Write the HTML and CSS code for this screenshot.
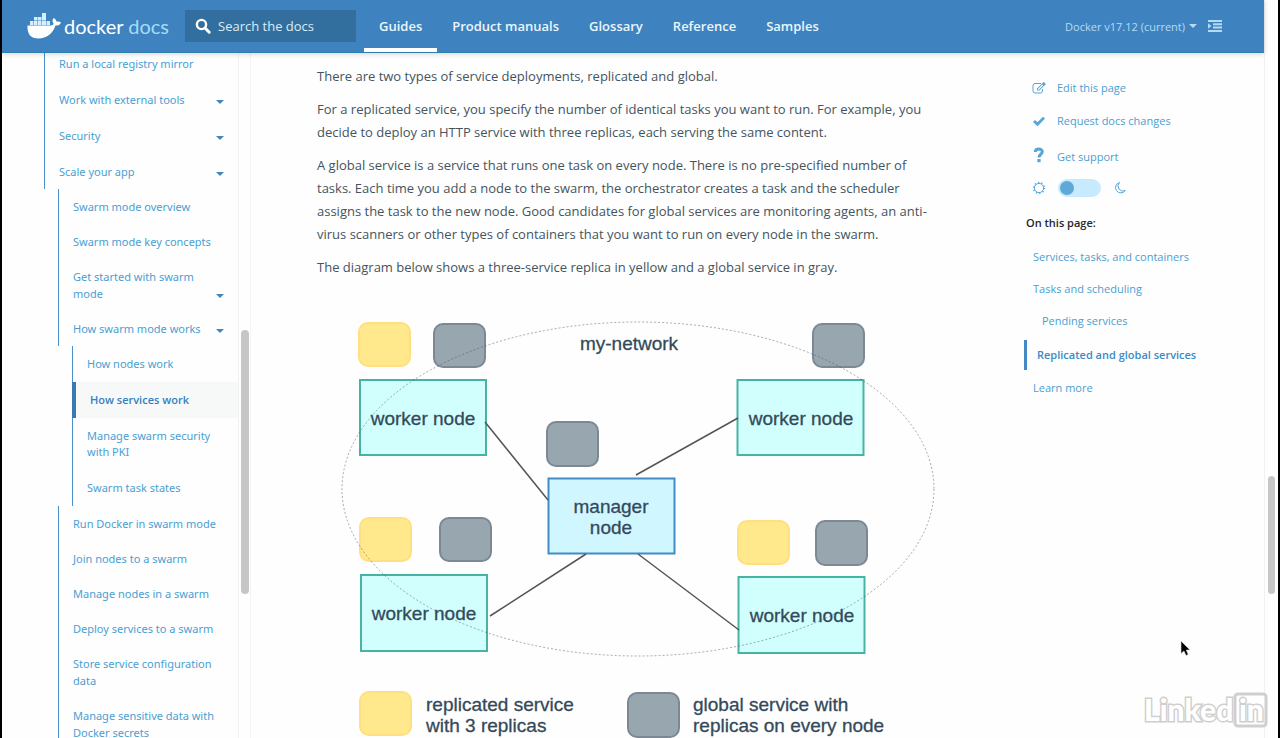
FILE: index.html
```
<!DOCTYPE html>
<html lang="en">
<head>
<meta charset="utf-8">
<title>How services work | Docker Documentation</title>
<link rel="stylesheet" href="styles.css">
</head>
<body>
<div class="page">
  <header class="topbar">
    <a class="brand" href="#">
      <svg class="whale" viewBox="0 0 34 28" aria-hidden="true">
        <g fill="#d5f0fc">
          <rect x="15" y="1" width="4" height="4"/>
          <rect x="7" y="5" width="3.500" height="3.500"/><rect x="11" y="5" width="3.500" height="3.500"/><rect x="15" y="5" width="4" height="3.500"/>
          <rect x="3" y="9" width="3.500" height="4"/><rect x="7" y="9" width="3.500" height="4"/><rect x="11" y="9" width="3.500" height="4"/><rect x="15" y="9" width="4" height="4"/><rect x="19.500" y="9" width="3.500" height="4"/>
        </g>
        <path fill="#fff" d="M0.500 13.500H23.500C25.500 13.500 26.500 12.500 26.500 11.500C25 9.500 25.200 7.500 26.800 6C28.500 7 29.300 8.500 29.500 9.800C31 9.400 32.800 9.600 34 10.400C33 12.800 31 13.700 28.500 13.600C25.800 22 19.500 26.500 11.500 26.500C4 26.500 0 22.500 0.500 13.500Z"/>
      </svg>
      <span class="brand-name">docker <span class="brand-docs">docs</span></span>
    </a>
    <label class="search">
      <svg class="search-icon" viewBox="0 0 16 16" aria-hidden="true"><circle cx="6.500" cy="6.500" r="4.600" fill="none" stroke="#fff" stroke-width="2.400"/><path d="M10 10L14.200 14.200" stroke="#fff" stroke-width="3" stroke-linecap="round"/></svg>
      <input type="text" placeholder="Search the docs" aria-label="Search the docs">
    </label>
    <nav class="tabs">
      <a class="tab tab-active" href="#">Guides</a>
      <a class="tab" href="#">Product manuals</a>
      <a class="tab" href="#">Glossary</a>
      <a class="tab" href="#">Reference</a>
      <a class="tab" href="#">Samples</a>
    </nav>
    <div class="tools">
      <button class="version" type="button">Docker v17.12 (current)<span class="caret"></span></button>
      <button class="outline-toggle" type="button" aria-label="Toggle outline">
        <svg viewBox="0 0 14 12" aria-hidden="true"><path fill="#b3dcf3" d="M0 0H14V2H0ZM5 3.300H14V5.300H5ZM5 6.600H14V8.600H5ZM0 10H14V12H0ZM0 3.300L3.500 6L0 8.700Z"/></svg>
      </button>
    </div>
  </header>
  <div class="body">
    <aside class="sidebar">
      <nav class="tree">
        <ul class="level level-1">
          <li><a href="#">Run a local registry mirror</a></li>
          <li><a href="#">Work with external tools<span class="caret"></span></a></li>
          <li><a href="#">Security<span class="caret"></span></a></li>
          <li><a href="#">Scale your app<span class="caret"></span></a>
            <ul class="level level-2">
              <li><a href="#">Swarm mode overview</a></li>
              <li><a href="#">Swarm mode key concepts</a></li>
              <li><a href="#">Get started with swarm mode<span class="caret"></span></a></li>
              <li><a href="#">How swarm mode works<span class="caret"></span></a>
                <ul class="level level-3">
                  <li><a href="#">How nodes work</a></li>
                  <li><a class="current" href="#">How services work</a></li>
                  <li><a href="#">Manage swarm security with PKI</a></li>
                  <li><a href="#">Swarm task states</a></li>
                </ul>
              </li>
              <li><a href="#">Run Docker in swarm mode</a></li>
              <li><a href="#">Join nodes to a swarm</a></li>
              <li><a href="#">Manage nodes in a swarm</a></li>
              <li><a href="#">Deploy services to a swarm</a></li>
              <li><a href="#">Store service configuration data</a></li>
              <li><a href="#">Manage sensitive data with Docker secrets</a></li>
            </ul>
          </li>
        </ul>
      </nav>
      <div class="track track-side"><div class="thumb"></div></div>
    </aside>
    <main class="article">
      <p>There are two types of service deployments, replicated and global.</p>
      <p>For a replicated service, you specify the number of identical tasks you want to run. For example, you decide to deploy an HTTP service with three replicas, each serving the same content.</p>
      <p>A global service is a service that runs one task on every node. There is no pre-specified number of tasks. Each time you add a node to the swarm, the orchestrator creates a task and the scheduler assigns the task to the new node. Good candidates for global services are monitoring agents, an anti-virus scanners or other types of containers that you want to run on every node in the swarm.</p>
      <p>The diagram below shows a three-service replica in yellow and a global service in gray.</p>
      <svg class="diagram" viewBox="317 289 620 455" role="img" aria-label="Replicated and global services across a swarm">
        <g class="replica">
          <rect x="359" y="323" width="51" height="43" rx="9"/>
          <rect x="360" y="518" width="51" height="43" rx="9"/>
          <rect x="738" y="521" width="51" height="43" rx="9"/>
          <rect x="360" y="692" width="51" height="43" rx="9"/>
        </g>
        <g class="global">
          <rect x="434" y="324" width="51" height="43" rx="9"/>
          <rect x="813" y="324" width="51" height="43" rx="9"/>
          <rect x="547" y="422" width="51" height="44" rx="9"/>
          <rect x="440" y="518" width="51" height="43" rx="9"/>
          <rect x="816" y="521" width="51" height="44" rx="9"/>
          <rect x="628" y="693" width="51" height="44" rx="9"/>
        </g>
        <g class="worker">
          <rect x="360" y="380" width="126" height="75"/>
          <rect x="737.500" y="380" width="126" height="75"/>
          <rect x="361" y="575" width="126" height="76"/>
          <rect x="738.500" y="577" width="126" height="76"/>
        </g>
        <rect class="manager" x="548.500" y="478.500" width="126" height="75"/>
        <path class="link" d="M485 422L548 500M738 418L636 475M586 554L490 616M638 554L739 630"/>
        <ellipse class="network" cx="638" cy="489" rx="296" ry="167"/>
        <g class="label centered">
          <text x="629" y="350">my-network</text>
          <text x="423" y="425">worker node</text>
          <text x="801" y="425">worker node</text>
          <text x="424" y="620">worker node</text>
          <text x="802" y="622">worker node</text>
          <text x="611" y="513">manager</text>
          <text x="611" y="534">node</text>
        </g>
        <g class="label">
          <text x="426" y="711">replicated service</text>
          <text x="426" y="732">with 3 replicas</text>
          <text x="693" y="711">global service with</text>
          <text x="693" y="732">replicas on every node</text>
        </g>
      </svg>
    </main>
    <aside class="rail">
      <ul class="actions">
        <li><a href="#"><svg viewBox="0 0 14 14" aria-hidden="true"><path d="M9 2.500H3A2 2 0 0 0 1 4.500V10A2 2 0 0 0 3 12H8.500A2 2 0 0 0 10.500 10V8" fill="none" stroke="#57a5d5"/><path fill="#57a5d5" fill-rule="evenodd" d="M5 7.500L11 1.500C11.600 1 12 1 12.500 1.500L13.300 2.300C13.800 2.800 13.800 3.200 13.300 3.700L7.300 9.600H5ZM5.900 7.900V8.800H6.800L11.200 4.400L10.300 3.500Z"/></svg>Edit this page</a></li>
        <li><a href="#"><svg viewBox="0 0 14 14" aria-hidden="true"><path d="M2 7L5.500 10.300L12 3.600" fill="none" stroke="#57a5d5" stroke-width="2.800"/></svg>Request docs changes</a></li>
        <li class="support"><a href="#"><svg viewBox="0 0 14 18" aria-hidden="true"><path d="M3.200 5C3.500 1 10.300 1.200 10.300 4.800C10.300 7.300 7 7.300 7 10.500" fill="none" stroke="#57a5d5" stroke-width="3"/><rect x="5.400" y="12" width="3.200" height="3.200" fill="#57a5d5"/></svg>Get support</a></li>
        <li class="theme">
          <svg viewBox="0 0 14 14" aria-hidden="true"><circle cx="7" cy="7" r="4.600" fill="none" stroke="#57a5d5"/><circle cx="7" cy="7" r="5.500" fill="none" stroke="#57a5d5" stroke-width="1.400" stroke-dasharray="1.200 2.256"/></svg>
          <input type="checkbox" class="switch" aria-label="Dark theme">
          <svg viewBox="0 0 14 14" aria-hidden="true"><path d="M6.500 1.500A5.300 5.300 0 1 0 12.300 9.500A5 5 0 0 1 6.500 1.500Z" fill="none" stroke="#57a5d5"/></svg>
        </li>
      </ul>
      <h2 class="toc-title">On this page:</h2>
      <ul class="toc">
        <li><a href="#">Services, tasks, and containers</a></li>
        <li><a href="#">Tasks and scheduling</a>
          <ul class="toc-sub"><li><a href="#">Pending services</a></li></ul>
        </li>
        <li><a class="toc-current" href="#">Replicated and global services</a></li>
        <li><a href="#">Learn more</a></li>
      </ul>
    </aside>
  </div>
</div>
<div class="track track-page"><div class="thumb"></div></div>
<svg class="pointer" viewBox="0 0 12 18" aria-hidden="true"><path d="M1 1V13.500L4 11L6 15.500L8.200 14.500L6.300 10H10Z" fill="#000" stroke="#ddd" stroke-width=".6"/></svg>
<svg class="watermark" viewBox="0 0 126 38" role="img" aria-label="LinkedIn">
  <rect x="92" y="3" width="31" height="32" rx="3"/>
  <text x="1" y="30">Linked</text>
  <text x="96" y="30">in</text>
</svg>
</body>
</html>
```
FILE: styles.css
```
* { box-sizing: border-box; }

body {
  margin: 0;
  height: 100vh;
  display: flex;
  overflow: hidden;
  position: relative;
  border-left: 2px solid #000;
  border-right: 2px solid #000;
  background: #fefefe;
  color: #44545e;
  font-family: "Open Sans", "Noto Sans", sans-serif;
  font-size: 11px;
}

a { color: #4a9fd2; text-decoration: none; }
ul { list-style: none; margin: 0; padding: 0; }
button { font: inherit; border: 0; padding: 0; background: none; }

.page {
  flex: 1;
  min-width: 0;
  display: flex;
  flex-direction: column;
}

/* Top bar */
.topbar {
  position: relative;
  z-index: 1;
  flex: none;
  height: 53px;
  display: flex;
  align-items: center;
  padding: 0 42px 0 25px;
  background: #3e83c0;
  border-bottom: 1px solid #2f7fae;
  box-shadow: 0 1px 5px rgba(0, 0, 0, .18);
}
.brand { display: flex; align-items: center; gap: 3px; width: 158px; color: #fff; }
.whale { width: 34px; height: 28px; }
.brand-name { font-family: Lato, sans-serif; font-size: 20px; line-height: 28px; white-space: nowrap; }
.brand-docs { color: #a5dcf8; }
.search {
  display: flex;
  align-items: center;
  gap: 7px;
  width: 171px;
  height: 32px;
  padding: 0 10px;
  background: #336f9e;
}
.search-icon { flex: none; width: 16px; height: 16px; }
.search input {
  flex: 1;
  min-width: 0;
  border: 0;
  padding: 0;
  background: none;
  color: #fff;
  font: inherit;
  font-size: 13px;
}
.search input::placeholder { color: #dcecf7; opacity: 1; }
.tabs { display: flex; align-self: stretch; margin-left: 8px; }
.tab {
  display: flex;
  align-items: center;
  padding: 4px 15px 0;
  border-bottom: 4px solid transparent;
  color: #eaf6fc;
  font-size: 13px;
  font-weight: 600;
  white-space: nowrap;
}
.tab-active { border-bottom-color: #fff; }
.tools { display: flex; align-items: center; gap: 11px; margin-left: auto; }
.version { display: flex; align-items: center; gap: 4px; color: #b3dcf3; white-space: nowrap; }
.caret {
  flex: none;
  border: 4px solid transparent;
  border-top-color: currentColor;
  border-bottom: 0;
}
.outline-toggle svg { display: block; width: 14px; height: 12px; }

/* Columns */
.body { flex: 1; min-height: 0; display: flex; }

.sidebar {
  flex: none;
  width: 249px;
  display: flex;
  border-right: 1px solid #f4f4f4;
  overflow: hidden;
}
.tree { flex: 1; min-width: 0; margin-top: -8px; font-family: "Noto Sans", "Open Sans", sans-serif; }
.level-1 { padding-left: 42px; }
.level .level { padding-left: 14px; }
.level a {
  display: flex;
  align-items: flex-end;
  justify-content: space-between;
  gap: 8px;
  border-left: 1px solid #4a8fc7;
  padding: 11px 14px 9px;
  line-height: 16px;
}
.level-2 a { padding: 9px 14px; line-height: 17px; }
.level-3 a { padding: 10px 14px; line-height: 16px; }
.level .caret { margin-bottom: 4px; color: #4186bf; }
.level .current {
  border-left: 4px solid #3b79b3;
  background: #f7f9f9;
  color: #3480bf;
  font-family: "Open Sans", "Noto Sans", sans-serif;
  font-weight: 600;
}

.track { flex: none; border-left: 1px solid #f1f1f1; }
.track .thumb { margin: 0 auto; border-radius: 4px; background: #c6c6c6; }
.track-side { width: 12px; padding-top: 277px; }
.track-side .thumb { width: 8px; height: 264px; }
.track-page { width: 14px; padding-top: 476px; }
.track-page .thumb { width: 7px; height: 118px; }

/* Article */
.article { flex: 1; min-width: 0; padding: 12px 87px 0 66px; font-size: 13px; line-height: 23px; overflow: hidden; }
.article p { margin: 0 0 10px; }
.diagram { display: block; width: 100%; }
.replica rect { fill: #ffe98c; stroke: #ffdf80; stroke-width: 2; }
.global rect { fill: #98a6b0; stroke: #7c8894; stroke-width: 2; }
.worker rect { fill: #d0fffd; stroke: #47b3a2; stroke-width: 2; }
.manager { fill: #d0f6ff; stroke: #428cc5; stroke-width: 2; }
.link { fill: none; stroke: #555; stroke-width: 1.5; }
.network { fill: none; stroke: #444; stroke-opacity: .45; stroke-dasharray: 2 2; }
.label { fill: #34495a; stroke: #34495a; stroke-width: .3; font-family: "Liberation Sans", Arial, sans-serif; font-size: 19px; }
.centered { text-anchor: middle; }

/* Right rail */
.rail { flex: none; width: 240px; padding-top: 18px; }
.actions { padding-left: 8px; }
.actions a { display: flex; align-items: center; gap: 11px; height: 33px; }
.actions svg { flex: none; width: 14px; height: 14px; }
.actions .support a { height: 38px; }
.actions .support svg { height: 18px; }
.theme { display: flex; align-items: center; gap: 12px; height: 26px; }
.switch {
  appearance: none;
  width: 43px;
  height: 18px;
  margin: 0;
  padding: 2px;
  border-radius: 9px;
  background: #c8eafe;
}
.switch::before {
  content: "";
  display: block;
  width: 14px;
  height: 14px;
  border-radius: 50%;
  background: #5fa9d8;
}
.toc-title { margin: 13px 0 9px 2px; color: #23272a; font-size: 11px; font-weight: 600; line-height: 18px; }
.toc a { display: block; padding-left: 9px; line-height: 32px; }
.toc-sub { padding-left: 9px; }
.toc .toc-current {
  margin: 3px 0 2px;
  border-left: 3px solid #4488c4;
  padding-left: 10px;
  color: #3a8bc6;
  font-weight: 600;
  line-height: 30px;
}

/* Overlays */
.pointer { position: absolute; right: 86px; bottom: 80px; width: 12px; height: 18px; }
.watermark { position: absolute; right: 9px; bottom: 9px; width: 126px; height: 38px; }
.watermark rect { fill: #fff; stroke: #cfcfcf; stroke-width: 3; }
.watermark text {
  fill: #fff;
  stroke: #cfcfcf;
  stroke-width: 3;
  paint-order: stroke;
  font-family: Lato, sans-serif;
  font-size: 30px;
  font-weight: 900;
}
```
